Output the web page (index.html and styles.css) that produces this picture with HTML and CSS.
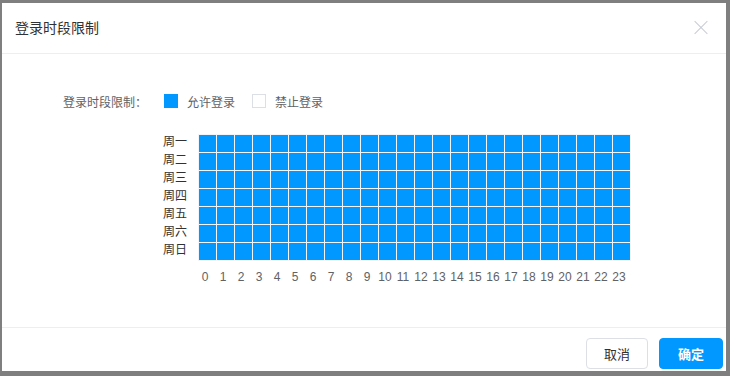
FILE: index.html
```html
<!DOCTYPE html>
<html lang="zh-CN">
  <head>
    <meta charset="UTF-8">
    <title>登录时段限制</title>
    <link rel="stylesheet" href="styles.css">
  </head>
  <body>
    <div class="frame">
      <div class="dialog">
        <div class="dialog-header">
          <span class="dialog-title">登录时段限制</span>
          <span class="dialog-close"></span>
        </div>
        <div class="dialog-body">
          <div class="legend">
            <span class="legend-label">登录时段限制：</span>
            <span class="swatch swatch-on"></span>
            <span class="legend-text">允许登录</span>
            <span class="swatch swatch-off"></span>
            <span class="legend-text">禁止登录</span>
          </div>
          <div class="schedule">
            <div class="days">
              <span>周一</span>
              <span>周二</span>
              <span>周三</span>
              <span>周四</span>
              <span>周五</span>
              <span>周六</span>
              <span>周日</span>
            </div>
            <div>
              <div class="grid" id="grid"></div>
              <div class="hours" id="hours"></div>
            </div>
          </div>
        </div>
        <div class="dialog-footer">
          <button class="btn">取消</button>
          <button class="btn btn-primary">确定</button>
        </div>
      </div>
    </div>
    <script>
      const grid = document.getElementById('grid');
      const hours = document.getElementById('hours');
      for (let d = 0; d < 7; d++) {
        for (let h = 0; h < 24; h++) {
          const cell = document.createElement('span');
          cell.className = 'cell on';
          grid.appendChild(cell);
        }
      }
      for (let h = 0; h < 24; h++) {
        const label = document.createElement('span');
        label.textContent = h;
        hours.appendChild(label);
      }
    </script>
  </body>
</html>
```

FILE: styles.css
```css
body {
    margin: 0;
    font-family: "Liberation Sans", "Noto Sans CJK SC", sans-serif;
    background-color: #7f7f7f;
}
.frame {
    width: 730px;
    height: 376px;
    box-sizing: border-box;
    padding: 3px 4px 5px 2px;
}
.dialog {
    background-color: #fff;
    height: 100%;
    overflow: hidden;
}
.dialog-header {
    height: 50px;
    border-bottom: 1px solid #ebeef5;
    display: flex;
    align-items: center;
    justify-content: space-between;
    padding: 0 18px 0 13px;
}
.dialog-title {
    font-size: 14px;
    color: #303133;
    line-height: 20px;
}
.dialog-close {
    position: relative;
    width: 14px;
    height: 14px;
}
.dialog-close::before,
.dialog-close::after {
    content: "";
    position: absolute;
    left: -2px;
    top: 6px;
    width: 18px;
    height: 1px;
    background-color: #c8ccd4;
    transform: rotate(45deg);
}
.dialog-close::after {
    transform: rotate(-45deg);
}
.dialog-body {
    height: 274px;
    padding-top: 38px;
    box-sizing: border-box;
    border-bottom: 1px solid #ebeef5;
}
.legend {
    display: flex;
    align-items: center;
    height: 18px;
    margin-left: 61px;
    font-size: 12px;
    color: #606266;
}
.legend-label {
    width: 101px;
}
.swatch {
    width: 14px;
    height: 14px;
    box-sizing: border-box;
}
.swatch-on {
    background-color: #0199ff;
}
.swatch-off {
    border: 1px solid #dcdfe6;
    background-color: #fff;
}
.legend-text {
    margin-left: 9px;
    margin-right: 17px;
}
.schedule {
    display: flex;
    margin-top: 24px;
    margin-left: 161px;
}
.days {
    display: flex;
    flex-direction: column;
    width: 25px;
    margin-right: 10px;
    font-size: 12px;
    color: #303133;
}
.days span {
    height: 18px;
    line-height: 16px;
}
.grid {
    display: grid;
    grid-template-columns: repeat(24, 17px);
    grid-auto-rows: 17px;
    gap: 1px;
    padding: 1px;
    background-color: #f2f4f8;
    width: max-content;
}
.cell {
    background-color: #fff;
}
.cell.on {
    background-color: #0199ff;
}
.hours {
    display: flex;
    margin: 8px 0 0 -2px;
    font-size: 12px;
    color: #606266;
    line-height: 16px;
}
.hours span {
    width: 18px;
    text-align: center;
}
.dialog-footer {
    display: flex;
    justify-content: flex-end;
    gap: 11px;
    padding: 10px 3px 0 0;
}
.btn {
    height: 31px;
    width: 62px;
    border: 1px solid #dcdfe6;
    border-radius: 4px;
    background-color: #fff;
    color: #303133;
    font-family: "Noto Sans CJK SC", sans-serif;
    font-size: 13px;
    padding: 0;
}
.btn-primary {
    width: 64px;
    background-color: #0199ff;
    border-color: #0199ff;
    color: #fff;
    font-weight: bold;
}
```
